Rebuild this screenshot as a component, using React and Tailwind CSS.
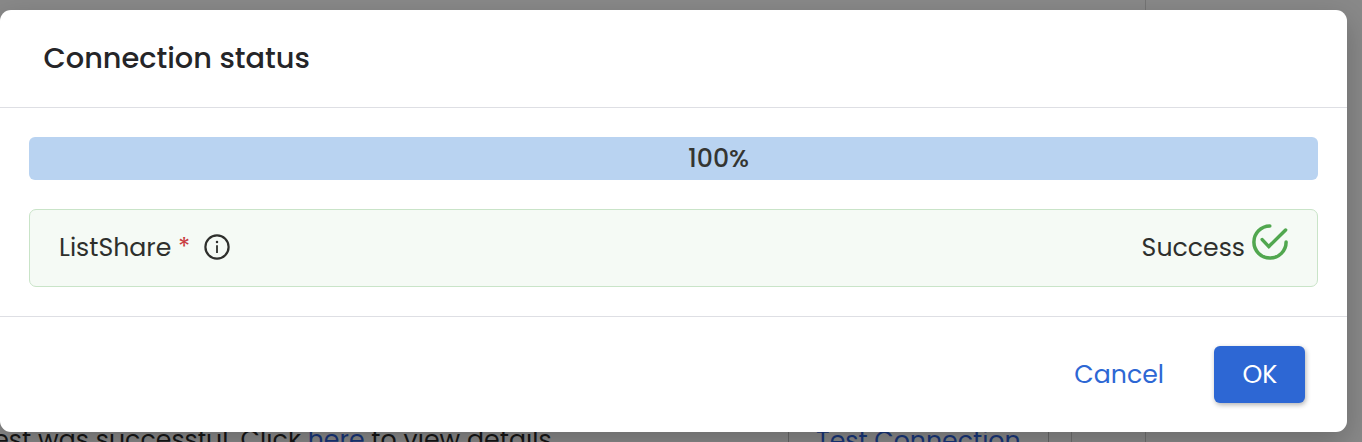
function InfoIcon() {
  return (
    <svg className="size-[26px] shrink-0" viewBox="0 0 26 26" fill="none">
      <circle cx="13" cy="13" r="11.6" stroke="#2e2f2c" strokeWidth="2.2" />
      <path d="M13 11.3V19" stroke="#2e2f2c" strokeWidth="1.8" />
      <circle cx="13" cy="7.9" r="1.25" fill="#2e2f2c" />
    </svg>
  );
}

function SuccessIcon() {
  return (
    <svg className="size-9 shrink-0" viewBox="0 0 36 36" fill="none" stroke="#51a74f" strokeWidth="3.5" strokeLinecap="round">
      <path d="M17.8 1.9A16.1 16.1 0 1 0 34.1 18" />
      <path d="M10.2 15.6L16.8 22.6L33.6 6" strokeLinejoin="miter" />
    </svg>
  );
}

function BackgroundPage() {
  return (
    <div className="flex h-full flex-col justify-between">
      <div className="flex h-[200px]">
        <div className="w-[1146px] border-r border-[#757575]" />
      </div>
      <div className="flex h-[60px] text-[25.2px] leading-[30px]">
        <div className="w-[789px] overflow-hidden border-r border-[#686868] pt-[43px] whitespace-nowrap text-[#161616]">
          <span className="-ml-[16px] tracking-[0.04px]">
            test was successful. Click <span className="text-[#18367a]">here</span> to view details
          </span>
        </div>
        <div className="w-[260px] border-r border-[#686868] pt-[44px] pl-[27px] whitespace-nowrap text-[#18367a]">
          <span>Test Connection</span>
        </div>
        <div className="w-[23px] border-r border-[#707070]" />
        <div className="w-[74px] border-r border-[#707070]" />
      </div>
    </div>
  );
}

export default function App() {
  return (
    <div className="relative h-[442px] w-[1362px] overflow-hidden bg-[#898989] font-['Poppins','Inter',sans-serif] [font-feature-settings:'cv11']">
      <BackgroundPage />
      <div role="dialog" className="absolute top-[10px] left-0 flex h-[422px] w-[1347px] flex-col rounded-[11px] bg-white shadow-[0_10px_30px_rgba(0,0,0,0.22)]">
        <header className="flex h-[98px] shrink-0 items-center border-b border-[#dedfe4] pb-0.5 pl-[43.5px]">
          <h1 className="text-[28.8px] leading-10 font-medium text-[#252528]">Connection status</h1>
        </header>
        <main className="flex h-[209px] shrink-0 flex-col gap-[29px] border-b border-[#dedfe4] px-[29px] pt-[29px]">
          <div className="flex h-[43px] items-center justify-center rounded-[6px] bg-[#b9d3f1] pl-[90px] text-[25.2px] font-medium text-[#343532]">
            <span>100%</span>
          </div>
          <div className="flex h-[78px] items-center justify-between rounded-[7px] border border-[#c9e4c8] bg-[#f5faf5] pr-[29px] pl-[29px] text-[25.2px] text-[#2e2f2c]">
            <div className="flex items-center">
              <span>ListShare</span>
              <span className="ml-[6.6px] text-[#c93a3f]">*</span>
              <span className="mb-0.5 ml-[14px]"><InfoIcon /></span>
            </div>
            <div className="flex items-center">
              <span>Success</span>
              <span className="mb-3 ml-[7px]"><SuccessIcon /></span>
            </div>
          </div>
        </main>
        <footer className="flex h-[115px] items-center justify-end pr-[42px] text-[25.2px]">
          <button className="mr-[50px] text-[#2d67d4]">Cancel</button>
          <button className="h-[57px] w-[91px] rounded-[6px] bg-[#2d67d4] pl-px text-white shadow-[1px_2px_5px_rgba(0,0,0,0.3)]">OK</button>
        </footer>
      </div>
    </div>
  );
}
